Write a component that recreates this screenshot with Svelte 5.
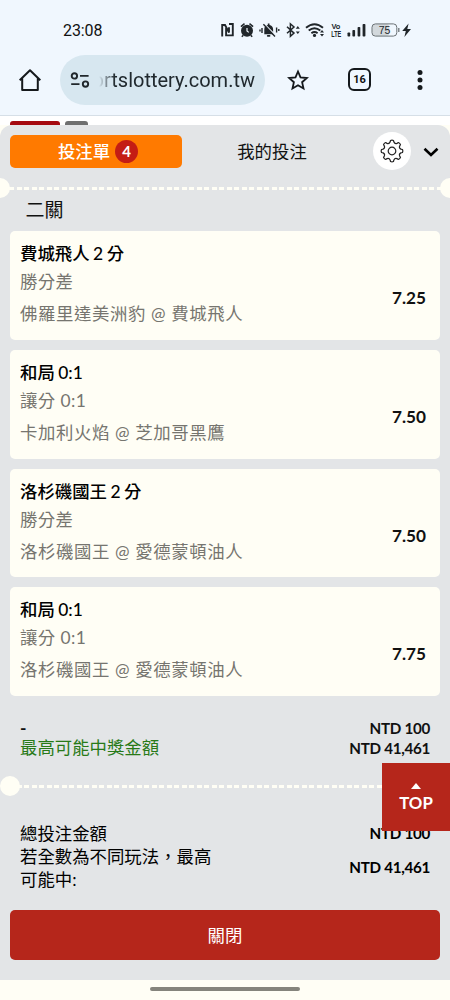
<script lang="ts">
	type Bet = { pick: string; market: string; match: string; odds: string };

	const bets: Bet[] = [
		{ pick: '費城飛人 2 分', market: '勝分差', match: '佛羅里達美洲豹 @ 費城飛人', odds: '7.25' },
		{ pick: '和局 0:1', market: '讓分 0:1', match: '卡加利火焰 @ 芝加哥黑鷹', odds: '7.50' },
		{ pick: '洛杉磯國王 2 分', market: '勝分差', match: '洛杉磯國王 @ 愛德蒙頓油人', odds: '7.50' },
		{ pick: '和局 0:1', market: '讓分 0:1', match: '洛杉磯國王 @ 愛德蒙頓油人', odds: '7.75' }
	];

	// eight rounded teeth, drawn round 0,0
	const gear = Array.from({ length: 8 }, (_, i) => {
		const at = (r: number, deg: number) => {
			const a = ((i * 45 + deg - 90) * Math.PI) / 180;
			return `${(r * Math.cos(a)).toFixed(2)} ${(r * Math.sin(a)).toFixed(2)}`;
		};
		return `${i ? 'L' : 'M'}${at(10.6, -8)} Q${at(11.2, 0)} ${at(10.6, 8)} L${at(9.1, 12)} Q${at(7.4, 22.5)} ${at(9.1, 33)}`;
	}).join(' ') + 'Z';
</script>

<div class="screen">
	<div class="status">
		<span class="time">23:08</span>
		<svg class="status-icons" width="194" height="18" viewBox="0 0 194 18">
			<g fill="#20262a">
				<path d="M2.2 15.4V4H5L9 11.5V6.2M6.1 7v7.4H12.8V3H9" fill="none" stroke="#20262a" stroke-width="1.9" />
				<circle cx="27" cy="9.8" r="6" />
				<path d="M20.9 5.6l3.6-3M33.1 5.6l-3.6-3M23.3 14.2l-1.5 1.6M30.7 14.2l1.5 1.6" stroke="#20262a" stroke-width="1.5" />
				<path d="M27 7V10l1.8 1.4" fill="none" stroke="#f0f7fe" stroke-width="1.2" />
				<path d="M44.3 13.2V8.2c0-2.5 1.4-3.8 3.5-4.2V2.6h1.7V4c2.2.5 3.6 2 3.6 4.2v3.3l1.3 1.7z" />
				<rect x="46.9" y="14" width="3.5" height="1.7" rx=".8" />
				<path d="M44.2 2.6l12 12.4" stroke="#f0f7fe" stroke-width="1.2" />
				<path d="M43.4 3.2L55 15.4M42 7v5M40 8.5v2M56.6 6.5v5M58.8 8v2" stroke="#20262a" stroke-width="1.4" />
				<path d="M67 5.8l7 6.3-3.6 3.2V2.8L74 6l-7 6.3" fill="none" stroke="#20262a" stroke-width="1.5" />
				<path d="M75.8 7.7l2-2.6 2 2.6zM75.8 10.5l2 2.6 2-2.6z" />
				<path d="M86 6.8q8.5-7.1 17 0M88.7 9.6q5.8-4.7 11.6 0M91.4 12.2q3.1-2.4 6.2 0" fill="none" stroke="#20262a" stroke-width="1.9" />
				<circle cx="94.5" cy="14.4" r="1.6" />
				<path d="M100 11.5l2-2.4 2 2.4zM100 13.1l2 2.4 2-2.4z" />
				<text x="111.4" y="8.4" font-size="8" font-weight="700" textLength="9" lengthAdjust="spacingAndGlyphs">Vo</text>
				<text x="111.2" y="15.5" font-size="8.4" font-weight="700" textLength="10" lengthAdjust="spacingAndGlyphs">LTE</text>
				<rect x="127.5" y="11.5" width="2.7" height="4" rx=".8" />
				<rect x="132.4" y="9" width="2.7" height="6.5" rx=".8" />
				<rect x="137.6" y="6" width="2.7" height="9.5" rx=".8" />
				<rect x="142.6" y="3" width="2.8" height="12.5" rx=".8" />
				<rect x="152.2" y="3" width="17" height="12" rx="3" fill="#d2d8dc" />
				<rect x="152" y="2.9" width="24.8" height="12.2" rx="3.4" fill="none" stroke="#6b7276" />
				<path d="M178.8 7v4" stroke="#6b7276" stroke-width="1.3" />
				<text x="164.6" y="12.8" text-anchor="middle" font-size="10.5">75</text>
				<path d="M188.6 2.4l-6.4 7.5h3.6l-1.4 6.2 6.6-8.2h-3.7z" />
			</g>
		</svg>
	</div>

	<div class="browser">
		<svg class="home" width="24" height="24" viewBox="0 0 24 24">
			<path d="M1.7 12.2L12 2.3l10.3 9.9M4.2 10.5V22h15.6V10.5" fill="none" stroke="#15191c" stroke-width="2" stroke-linejoin="round" />
		</svg>
		<div class="address">
			<svg width="20" height="16" viewBox="0 0 20 16" fill="none" stroke="#20272b" stroke-width="1.9">
				<circle cx="4.4" cy="3.9" r="2.7" />
				<path d="M10 3.9h8.6M1.2 12.1h8.3" />
				<circle cx="15.5" cy="12.1" r="2.7" />
			</svg>
			<span class="url"><span>ortslottery.com.tw</span></span>
		</div>
		<svg class="star" width="22" height="22" viewBox="0 0 22 22">
			<path d="M11 2.5l2.5 5.9 6.4.6-4.8 4.2 1.4 6.3L11 16.2l-5.5 3.3 1.4-6.3L2.1 9l6.4-.6z" fill="none" stroke="#15191c" stroke-width="1.8" />
		</svg>
		<span class="tabs-count">16</span>
		<svg class="more" width="6" height="22" viewBox="0 0 6 22" fill="#15191c">
			<circle cx="3" cy="3.4" r="2.5" />
			<circle cx="3" cy="11" r="2.5" />
			<circle cx="3" cy="18.6" r="2.5" />
		</svg>
	</div>

	<div class="page-strip">
		<i class="chip red"></i>
		<i class="chip grey"></i>
	</div>

	<main class="slip">
		<header>
			<button class="tab active">投注單 <b>4</b></button>
			<button class="tab">我的投注</button>
			<button class="settings" aria-label="設定">
				<svg width="26" height="26" viewBox="-13 -13 26 26" fill="none" stroke="#222" stroke-width="1.2">
					<path d={gear} stroke-linejoin="round" />
					<circle r="3.8" />
				</svg>
			</button>
			<svg class="chevron" width="16" height="10" viewBox="0 0 16 10">
				<path d="M1.5 1.7L8 7.9l6.5-6.2" fill="none" stroke="#000" stroke-width="2.6" />
			</svg>
		</header>

		<div class="tear first"></div>

		<h2>二關</h2>

		<ul>
			{#each bets as bet}
				<li>
					<div class="pick">{bet.pick}</div>
					<div class="market">{bet.market}</div>
					<div class="match">{bet.match}</div>
					<strong class="odds">{bet.odds}</strong>
				</li>
			{/each}
		</ul>

		<section class="sum">
			<div class="row"><b>-</b><span class="amount">NTD 100</span></div>
			<div class="row"><span class="win">最高可能中獎金額</span><span class="amount">NTD 41,461</span></div>
		</section>

		<div class="tear second"></div>

		<section class="total">
			<div class="row"><span>總投注金額</span><span class="amount">NTD 100</span></div>
			<div class="row tall"><span>若全數為不同玩法，最高<br />可能中:</span><span class="amount">NTD 41,461</span></div>
		</section>

		<button class="close">關閉</button>
	</main>

	<div class="nav"><i></i></div>

	<button class="top">
		<svg width="10" height="6" viewBox="0 0 10 6"><path d="M0 6l5-6 5 6z" fill="#fff" /></svg>
		<span>TOP</span>
	</button>
</div>

<style>
	:global(body) { margin: 0; background: #fffef5; }
	* { box-sizing: border-box; }
	button { border: 0; padding: 0; margin: 0; font: inherit; color: inherit; background: none; }

	.screen {
		position: relative; width: 450px; height: 1000px; overflow: hidden;
		display: flex; flex-direction: column;
		font-family: Lato, "Noto Sans CJK TC", sans-serif; font-size: 17.4px; color: #111;
		background: #fffef5;
	}

	.status {
		height: 48px; flex-shrink: 0; padding: 12px 31px 0 63px;
		display: flex; justify-content: space-between;
		background: #f0f7fe; font-family: Roboto, sans-serif;
	}
	.time { font-size: 16px; line-height: 37px; letter-spacing: -0.1px; }
	.status-icons { margin: 9px 5px 0 0; }
	.status-icons text { font-family: "Liberation Sans", sans-serif; }

	.browser {
		height: 68px; flex-shrink: 0; padding: 0 27px 4px 18px;
		display: flex; align-items: center;
		background: #f0f7fe; border-bottom: 1px solid #d6dfe7;
	}
	.address {
		width: 205px; height: 50px; margin-left: 18px; padding-left: 10px;
		display: flex; align-items: center;
		border-radius: 25px; background: #d7e7f0;
	}
	.url {
		width: 156px; margin-left: 9px; overflow: hidden;
		display: flex; justify-content: flex-end; white-space: nowrap;
		font-family: Roboto, sans-serif; font-size: 20px; line-height: 30px; color: #20292e;
		-webkit-mask-image: linear-gradient(90deg, transparent, #000 16px);
		mask-image: linear-gradient(90deg, transparent, #000 16px);
	}
	.star { margin-left: 22px; }
	.tabs-count {
		width: 23px; height: 23px; margin-left: 39px;
		border: 2px solid #15191c; border-radius: 6px;
		font-family: Roboto, sans-serif; font-size: 11px; font-weight: 700; line-height: 19px; text-align: center;
	}
	.more { margin-left: auto; }

	.page-strip { display: flex; gap: 5px; height: 9px; padding: 5px 10px 0; flex-shrink: 0; background: #fff; }
	.chip { height: 4px; border-radius: 3px 3px 0 0; }
	.chip.red { width: 50px; background: #a5090f; }
	.chip.grey { width: 23px; background: #6f6f6f; }

	.slip {
		height: 855px; flex-shrink: 0;
		background: #e3e5e7; border-radius: 12px 12px 0 0;
	}
	header { display: flex; align-items: center; height: 52px; margin-bottom: 1px; padding: 0 11px 0 10px; }
	.tab { width: 180px; height: 33px; line-height: 33px; }
	.tab.active {
		width: 172px; padding-left: 4px; border-radius: 5px; background: #ff7a00; color: #fff; font-weight: 500;
		display: flex; align-items: center; justify-content: center; gap: 5px;
	}
	.tab b {
		width: 23px; height: 23px; border-radius: 50%; background: #c41d14;
		font-size: 15px; font-weight: 700; line-height: 22px; text-align: center;
	}
	.settings {
		width: 38px; height: 38px; margin-left: 11px; border-radius: 50%; background: #fff;
		display: grid; place-items: center;
	}
	.chevron { margin: 2px 0 0 auto; }

	.tear {
		position: relative; height: 20px;
		background: repeating-linear-gradient(90deg, #fffef5 0 5px, transparent 5px 7.5px) 9px 9px / 100% 3px no-repeat;
	}
	.tear::before, .tear.first::after {
		content: ""; position: absolute; top: 0; left: 0;
		width: 20px; height: 20px; border-radius: 50%; background: #fffef5;
	}
	.tear.first::before { left: -10px; }
	.tear.first::after { left: auto; right: -10px; }
	.tear.second { margin-top: 17px; }

	h2 { margin: 0; height: 33px; padding-left: 25.5px; font-size: 19px; font-weight: 400; line-height: 24px; }

	ul { margin: 0; padding: 0 10px; list-style: none; display: grid; gap: 10px; }
	li {
		position: relative; height: 108.8px; padding: 10px 10px 0;
		border-radius: 5px; background: #fffef5; white-space: nowrap;
	}
	.pick { height: 26px; line-height: 26px; font-weight: 500; word-spacing: -0.9px; color: #000; }
	.market { height: 30px; line-height: 30px; letter-spacing: 0.4px; color: #76756f; }
	.match { height: 34px; line-height: 34px; letter-spacing: 0.6px; color: #76756f; }
	.odds { position: absolute; right: 14px; top: 57px; font-size: 17.2px; line-height: 20px; font-weight: 700; }

	.row { display: flex; justify-content: space-between; align-items: center; }
	.amount { font-size: 15.2px; font-weight: 700; letter-spacing: -0.3px; }
	.sum { padding: 22px 20px 0; height: 62.8px; }
	.sum .row { height: 20px; line-height: 20px; }
	.win { color: #287a18; }
	.total { padding: 26px 20px 0; height: 114.2px; line-height: 23px; color: #000; }
	.total .row { height: 23px; }
	.total .row.tall { height: 46px; }

	.close {
		display: block; width: 430px; height: 50px; margin: 0 10px; padding-bottom: 1px;
		border-radius: 5px; background: #b5261b; color: #fff;
	}

	.nav { height: 20px; display: flex; justify-content: center; padding-top: 7px; }
	.nav i { width: 150px; height: 4px; border-radius: 2px; background: #85847c; }

	.top {
		position: absolute; right: 0; top: 763px; width: 68px; height: 68px;
		display: flex; flex-direction: column; align-items: center;
		padding-top: 20px; background: #b5261b; color: #fff; font-weight: 700;
	}
	.top span { margin-top: 3px; font-size: 16.8px; line-height: 22px; }
</style>
